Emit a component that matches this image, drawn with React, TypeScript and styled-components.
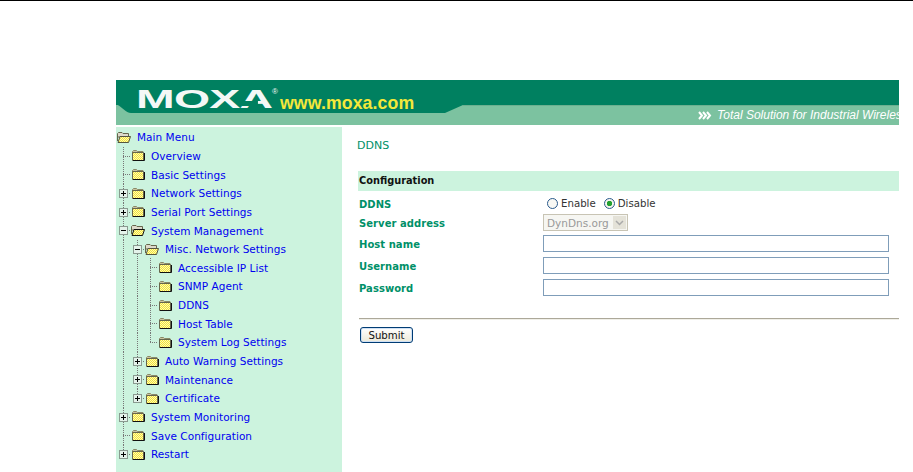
import React from 'react';
import styled, { createGlobalStyle } from 'styled-components';

const GlobalStyle = createGlobalStyle`
  html, body {
    margin: 0;
    padding: 0;
    background: #fff;
    overflow: hidden;
  }
  body {
    font-family: 'DejaVu Sans', Verdana, sans-serif;
    font-size: 10.5px;
  }
`;

const Page = styled.div`
  width: 913px;
  height: 472px;
  overflow: hidden;
`;

const TopRule = styled.hr`
  height: 1px;
  margin: 0;
  border: 0;
  background: #000;
`;

const Sheet = styled.div`
  width: 783px;
  margin: 79px 0 0 116px;
`;

const Banner = styled.header`
  position: relative;
  height: 45px;
  background: linear-gradient(#008060 0 25px, #7cc2a0 25px);
  overflow: hidden;
`;

const BannerShape = styled.svg`
  position: absolute;
  left: 0;
  top: 0;
`;

const Logo = styled.div`
  position: absolute;
  left: 20px;
  top: 5px;
  display: flex;
  align-items: baseline;
`;

const LogoWord = styled.span`
  position: relative;
  display: inline-block;
  width: 136px;
  font: bold 25.5px/28px 'Liberation Sans', Arial, sans-serif;
  color: #f4f8f6;
  transform: scaleX(1.82);
  transform-origin: left center;
  letter-spacing: -0.4px;
  /* the logo's A has no crossbar */
  &::after {
    content: '';
    position: absolute;
    left: 57.5px;
    top: 16px;
    width: 9px;
    height: 5px;
    background: #008060;
  }
`;

const Reg = styled.sup`
  font: 8px 'Liberation Sans', Arial, sans-serif;
  color: #f4f8f6;
  width: 8px;
  align-self: flex-start;
  line-height: 14px;
`;

const Url = styled.span`
  position: relative;
  top: 1px;
  font: bold 17.7px 'Liberation Sans', Arial, sans-serif;
  color: #f4e83a;
  letter-spacing: 0.1px;
`;

const Slogan = styled.div`
  position: absolute;
  left: 582px;
  top: 27px;
  display: flex;
  align-items: center;
  gap: 5px;
  white-space: nowrap;
  font: italic 12px/16px 'Liberation Sans', Arial, sans-serif;
  color: #fff;
`;

const Columns = styled.div`
  display: flex;
  margin-top: 2px;
`;

const Sidebar = styled.nav`
  width: 226px;
  height: 345px;
  padding: 1px 0 0 1px;
  box-sizing: border-box;
  background: #ccf3de;
`;

const Row = styled.div`
  display: flex;
  align-items: center;
  height: 18.65px;
  white-space: nowrap;
`;

const Guide = styled.span`
  align-self: stretch;
  width: 14px;
  flex: none;
  background: repeating-linear-gradient(#777 0 1px, transparent 1px 2px) 6px 0 / 1px 100% no-repeat;
  &:nth-child(2) {
    width: 13px;
  }
`;

const Stub = styled.span<{ $last?: boolean }>`
  position: relative;
  align-self: stretch;
  width: 14px;
  flex: none;
  background:
    repeating-linear-gradient(90deg, #777 0 1px, transparent 1px 2px) 6px 9px / 8px 1px no-repeat,
    repeating-linear-gradient(#777 0 1px, transparent 1px 2px) 6px 0 / 1px ${(p) => (p.$last ? '10px' : '100%')} no-repeat;
`;

const Toggle = styled.span`
  position: absolute;
  left: 2px;
  top: 5px;
  width: 9px;
  height: 9px;
  box-sizing: border-box;
  border: 1px solid #8a9a90;
  background: #e4f2ea;
  &::before {
    content: '';
    position: absolute;
    left: 1px;
    top: 3px;
    width: 5px;
    height: 1px;
    background: #000;
  }
`;

const Plus = styled(Toggle)`
  &::after {
    content: '';
    position: absolute;
    left: 3px;
    top: 1px;
    width: 1px;
    height: 5px;
    background: #000;
  }
`;

const Icon = styled.svg`
  flex: none;
  width: 14px;
  height: 11px;
`;

const Label = styled.a`
  margin-left: 6px;
  color: #0000f0;
  letter-spacing: 0.04px;
`;

const Main = styled.main`
  flex: 1;
  padding: 12px 0 0 16px;
  min-width: 0;
`;

const PageTitle = styled.h1`
  margin: 0 0 18px -1px;
  font: normal 11px/14px 'DejaVu Sans', Verdana, sans-serif;
  color: #009068;
`;

const SectionHead = styled.div`
  height: 20px;
  padding-left: 1px;
  font: bold 9.8px/20px 'DejaVu Sans', Verdana, sans-serif;
  color: #111;
  background: #ccf3de;
`;

const Form = styled.div`
  display: grid;
  grid-template-columns: 185px 346px;
  grid-template-rows: 19px 21px 22px 22px 22px;
  align-items: start;
  margin-top: 4px;
`;

const FieldName = styled.label`
  padding: 1px 0 0 1px;
  font: bold 10px/17px 'DejaVu Sans', Verdana, sans-serif;
  letter-spacing: 0.05px;
  color: #009068;
`;

const Radios = styled.div`
  display: flex;
  align-items: center;
  height: 17px;
  padding-left: 4px;
  font-size: 10.2px;
  color: #333;
`;

const RadioDot = styled.span<{ $on?: boolean }>`
  width: 11px;
  height: 11px;
  box-sizing: border-box;
  border: 1px solid #2a5a8c;
  border-radius: 50%;
  margin-right: 3px;
  background: ${(p) =>
    p.$on ? 'radial-gradient(circle, #22a030 0 2.5px, #f4f4ee 3px)' : '#f8f8f4'};
`;

const RadioText = styled.span`
  margin-right: 8px;
`;

const FakeSelect = styled.div`
  display: flex;
  align-items: center;
  justify-content: space-between;
  box-sizing: border-box;
  width: 85px;
  height: 17px;
  padding: 0 1px 0 3px;
  border: 1px solid #c8c4b4;
  color: #999;
  background: #f6f6f2;
`;

const SelectArrow = styled.span`
  width: 13px;
  height: 13px;
  background: #e4e2d8;
  display: flex;
  align-items: center;
  justify-content: center;
`;

const TextBox = styled.input`
  display: block;
  box-sizing: border-box;
  width: 346px;
  height: 17px;
  border: 1px solid #7f9db9;
  background: #fff;
  padding: 0;
`;

const Divider = styled.hr`
  height: 1px;
  margin: 17px 0 0 1px;
  border: 0;
  background: #aca899;
  box-shadow: 0 1px 0 #f0efe8;
`;

const SubmitButton = styled.button`
  display: block;
  width: 53px;
  height: 16px;
  margin: 8px 0 0 2px;
  padding: 0;
  border: 1px solid #003c74;
  border-radius: 3px;
  font: 10.2px 'DejaVu Sans', Verdana, sans-serif;
  color: #111;
  background: linear-gradient(#fff, #ece9d8);
  box-shadow: inset 0 0 0 1px #cfe0f4;
`;

const Dither = () => (
  <pattern id="dither" width="2" height="2" patternUnits="userSpaceOnUse">
    <rect width="2" height="2" fill="#f2e23c" />
    <rect width="1" height="1" fill="#fffbb0" />
    <rect x="1" y="1" width="1" height="1" fill="#fffbb0" />
  </pattern>
);

const FolderClosed = () => (
  <Icon viewBox="0 0 14 11">
    <path d="M1.5 10 V1.5 L2.5 .5 H5.5 L6.5 1.5 H12 V3" fill="#c9c3a0" stroke="#8a8a68" />
    <rect x="2" y="3" width="10" height="7" fill="url(#dither)" />
    <path d="M1.5 2.5 H12.5 V10.5 H1.5 Z" fill="none" stroke="#66664c" />
    <path d="M13.5 3 V10.5 H2" fill="none" stroke="#111" />
  </Icon>
);

const FolderOpen = ({ dark }: { dark?: boolean }) => (
  <Icon viewBox="0 0 14 11">
    <path d="M.5 9 V1.5 L1.5 .5 H5 L6 1.5 H11.5 V5 H.5 Z" fill="#dedacb" stroke="#66664c" />
    <path d="M1 10.5 L3 4.5 H13.5 L11.5 10.5 Z" fill="url(#dither)" stroke={dark ? '#111' : '#55553f'} />
  </Icon>
);

type Item = {
  label: string;
  depth: number;
  kind?: 'plus' | 'minus' | 'stub';
  last?: boolean;
  open?: 'dark' | 'light';
};

const tree: Item[] = [
  { label: 'Main Menu', depth: 0, open: 'light' },
  { label: 'Overview', depth: 0, kind: 'stub' },
  { label: 'Basic Settings', depth: 0, kind: 'stub' },
  { label: 'Network Settings', depth: 0, kind: 'plus' },
  { label: 'Serial Port Settings', depth: 0, kind: 'plus' },
  { label: 'System Management', depth: 0, kind: 'minus', open: 'dark' },
  { label: 'Misc. Network Settings', depth: 1, kind: 'minus', open: 'light' },
  { label: 'Accessible IP List', depth: 2, kind: 'stub' },
  { label: 'SNMP Agent', depth: 2, kind: 'stub' },
  { label: 'DDNS', depth: 2, kind: 'stub' },
  { label: 'Host Table', depth: 2, kind: 'stub' },
  { label: 'System Log Settings', depth: 2, kind: 'stub', last: true },
  { label: 'Auto Warning Settings', depth: 1, kind: 'plus' },
  { label: 'Maintenance', depth: 1, kind: 'plus' },
  { label: 'Certificate', depth: 1, kind: 'plus', last: true },
  { label: 'System Monitoring', depth: 0, kind: 'plus' },
  { label: 'Save Configuration', depth: 0, kind: 'stub' },
  { label: 'Restart', depth: 0, kind: 'plus', last: true },
];

const App: React.FC = () => (
  <Page>
    <GlobalStyle />
    <TopRule />
    <svg width="0" height="0" style={{ position: 'absolute' }}>
      <defs>
        <Dither />
      </defs>
    </svg>
    <Sheet>
      <Banner>
        <BannerShape width="783" height="45" viewBox="0 0 783 45">
          <path d="M0 24 C5 26 10 33 15 33 H329 L347 25 V24 Z" fill="#008060" />
          <path d="M347 25.5 H783" stroke="#6cb090" />
        </BannerShape>
        <Logo>
          <LogoWord>MOXA</LogoWord>
          <Reg>®</Reg>
          <Url>www.moxa.com</Url>
        </Logo>
        <Slogan>
          <svg width="14" height="9" viewBox="0 0 14 9">
            <path d="M1 1 L4 4.5 L1 8 M5 1 L8 4.5 L5 8 M9 1 L12 4.5 L9 8" fill="none" stroke="#fff" strokeWidth="2" />
          </svg>
          Total Solution for Industrial Wireless
        </Slogan>
      </Banner>
      <Columns>
        <Sidebar>
          {tree.map((item) => (
            <Row key={item.label}>
              {Array.from({ length: item.depth }, (_, i) => (
                <Guide key={i} />
              ))}
              {item.kind && (
                <Stub $last={item.last}>
                  {item.kind === 'plus' && <Plus />}
                  {item.kind === 'minus' && <Toggle />}
                </Stub>
              )}
              {item.open ? <FolderOpen dark={item.open === 'dark'} /> : <FolderClosed />}
              <Label>{item.label}</Label>
            </Row>
          ))}
        </Sidebar>
        <Main>
          <PageTitle>DDNS</PageTitle>
          <SectionHead>Configuration</SectionHead>
          <Form>
            <FieldName>DDNS</FieldName>
            <Radios>
              <RadioDot />
              <RadioText>Enable</RadioText>
              <RadioDot $on />
              <RadioText>Disable</RadioText>
            </Radios>
            <FieldName>Server address</FieldName>
            <FakeSelect>
              DynDns.org
              <SelectArrow>
                <svg width="9" height="6" viewBox="0 0 9 6">
                  <path d="M1 1 L4.5 4.5 L8 1" fill="none" stroke="#aaa" strokeWidth="1.5" />
                </svg>
              </SelectArrow>
            </FakeSelect>
            <FieldName>Host name</FieldName>
            <TextBox />
            <FieldName>Username</FieldName>
            <TextBox />
            <FieldName>Password</FieldName>
            <TextBox />
          </Form>
          <Divider />
          <SubmitButton>Submit</SubmitButton>
        </Main>
      </Columns>
    </Sheet>
  </Page>
);

export default App;
